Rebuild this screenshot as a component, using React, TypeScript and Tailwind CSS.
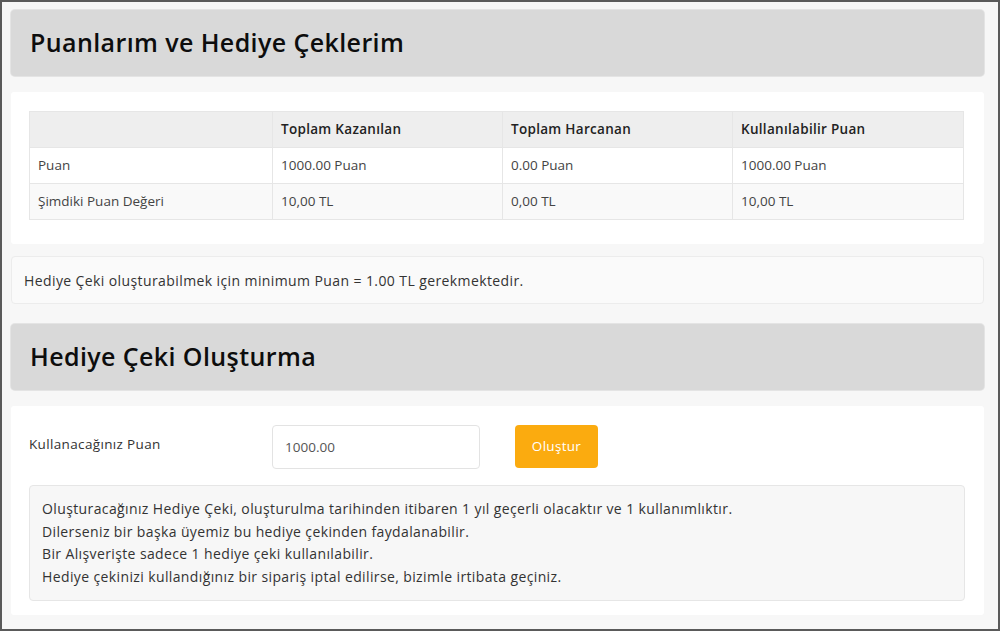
import React from "react";

const rows = [
  ["Puan", "1000.00 Puan", "0.00 Puan", "1000.00 Puan"],
  ["Şimdiki Puan Değeri", "10,00 TL", "0,00 TL", "10,00 TL"],
];

function Header({ title }: { title: string }) {
  return (
    <div className="h-[66px] rounded-[4px] bg-[#d9d9d9] flex items-center px-[19px] shadow-[0_0_0_1px_#e4e4e4]">
      <h2 className="text-[25px] font-semibold text-[#0d0d0d] tracking-[0.4px]">{title}</h2>
    </div>
  );
}

export default function App() {
  return (
    <div
      className="w-[1000px] h-[631px] overflow-hidden border-2 border-[#5a5a5a] bg-[#f7f7f7] text-[#333]"
      style={{ fontFamily: "'Open Sans', 'Noto Sans', sans-serif" }}
    >
      <div className="pl-[9px] pr-[14px] pt-[8px] flex flex-col">
        <Header title="Puanlarım ve Hediye Çeklerim" />
        <div className="mt-[16px] bg-white rounded-[3px] px-[18px] pt-[19px] pb-[24px]">
          <table className="w-[935px] border-collapse text-[13.5px]">
            <thead>
              <tr className="bg-[#eeeeee] h-[36px]">
                <th className="w-[243px] border border-[#e6e6e6]"></th>
                <th className="w-[230px] text-left font-semibold text-[#222] px-[8px] border border-[#e6e6e6] tracking-[0.3px]">Toplam Kazanılan</th>
                <th className="w-[230px] text-left font-semibold text-[#222] px-[8px] border border-[#e6e6e6] tracking-[0.3px]">Toplam Harcanan</th>
                <th className="text-left font-semibold text-[#222] px-[8px] border border-[#e6e6e6] tracking-[0.3px]">Kullanılabilir Puan</th>
              </tr>
            </thead>
            <tbody>
              {rows.map((r, i) => (
                <tr key={i} className={`h-[36px] ${i === 1 ? "bg-[#f9f9f9]" : "bg-white"}`}>
                  {r.map((c, j) => (
                    <td key={j} className="px-[8px] border border-[#e6e6e6] text-[#444]">{c}</td>
                  ))}
                </tr>
              ))}
            </tbody>
          </table>
        </div>
        <div className="mt-[12px] h-[48px] bg-[#fafafa] border border-[#ececec] rounded-[4px] flex items-center px-[12px] text-[14px] tracking-[0.4px] text-[#333]">
          Hediye Çeki oluşturabilmek için minimum Puan = 1.00 TL gerekmektedir.
        </div>
        <div className="mt-[20px]">
          <Header title="Hediye Çeki Oluşturma" />
        </div>
        <div className="mt-[16px] bg-white rounded-[3px] px-[18px] pt-[19px] pb-[14px]">
          <div className="flex items-start">
            <div className="w-[243px] text-[13.5px] tracking-[0.35px] pt-[9px]">Kullanacağınız Puan</div>
            <div className="w-[208px] h-[44px] border border-[#e3e3e3] rounded-[4px] flex items-center px-[12px] text-[13.5px] text-[#555]">1000.00</div>
            <button className="ml-[35px] w-[83px] h-[43px] rounded-[4px] bg-[#fbab0f] text-white text-[13.5px] tracking-[0.3px]">Oluştur</button>
          </div>
          <div className="mt-[16px] w-[936px] bg-[#f7f7f7] border border-[#e6e6e6] rounded-[4px] px-[12px] pt-[12px] pb-[11px] text-[14px] tracking-[0.38px] leading-[22.7px]">
            <p>Oluşturacağınız Hediye Çeki, oluşturulma tarihinden itibaren 1 yıl geçerli olacaktır ve 1 kullanımlıktır.</p>
            <p>Dilerseniz bir başka üyemiz bu hediye çekinden faydalanabilir.</p>
            <p>Bir Alışverişte sadece 1 hediye çeki kullanılabilir.</p>
            <p>Hediye çekinizi kullandığınız bir sipariş iptal edilirse, bizimle irtibata geçiniz.</p>
          </div>
        </div>
      </div>
    </div>
  );
}
